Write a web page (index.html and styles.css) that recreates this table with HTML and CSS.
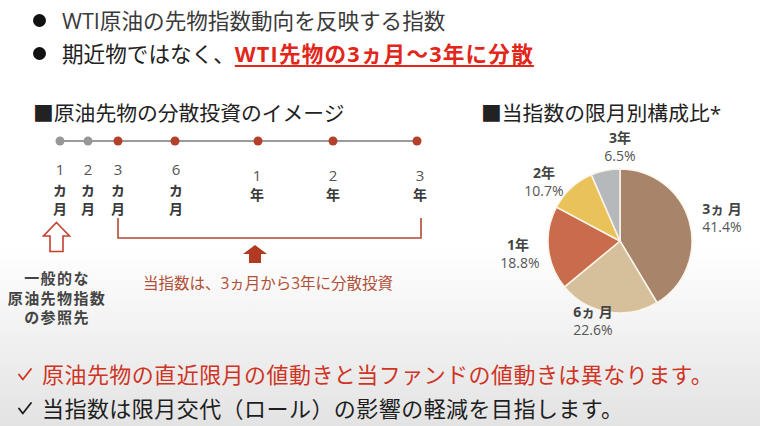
FILE: index.html
```html
<!DOCTYPE html>
<html lang="ja">
<head>
<meta charset="utf-8">
<title>WTI原油先物指数</title>
<link rel="stylesheet" href="styles.css">
</head>
<body>
<div class="slide">
  <ul class="points">
    <li>WTI原油の先物指数動向を反映する指数</li>
    <li><span class="strong">期近物ではなく、</span><span class="em">WTI先物の3ヵ月～3年に分散</span></li>
  </ul>

  <div class="charts">
    <section class="panel panel-left">
      <h2 class="panel-title">■原油先物の分散投資のイメージ</h2>
      <svg class="diagram" width="470" height="212" viewBox="0 -2 470 212">
        <line x1="60" y1="13" x2="417" y2="13" class="axis"/>
        <circle cx="60" cy="13" r="4.5" class="dot-grey"/>
        <circle cx="88" cy="13" r="4.5" class="dot-grey"/>
        <circle cx="118" cy="13" r="4.5" class="dot-red"/>
        <circle cx="175" cy="13" r="4.5" class="dot-red"/>
        <circle cx="258" cy="13" r="4.5" class="dot-red"/>
        <circle cx="333" cy="13" r="4.5" class="dot-red"/>
        <circle cx="417" cy="13" r="4.5" class="dot-red"/>

        <g class="tick-num">
          <text x="60" y="41">1</text>
          <text x="88" y="41">2</text>
          <text x="118" y="41">3</text>
          <text x="176" y="41">6</text>
          <text x="257" y="47">1</text>
          <text x="333" y="47">2</text>
          <text x="420" y="47">3</text>
        </g>
        <g class="tick-unit">
          <text x="60" y="61" class="small">ヵ</text>
          <text x="88" y="61" class="small">ヵ</text>
          <text x="118" y="61" class="small">ヵ</text>
          <text x="176" y="61" class="small">ヵ</text>
          <text x="60" y="80">月</text>
          <text x="88" y="80">月</text>
          <text x="118" y="80">月</text>
          <text x="176" y="80">月</text>
          <text x="257" y="66">年</text>
          <text x="333" y="66">年</text>
          <text x="420" y="66">年</text>
        </g>

        <path d="M118 90 V110 H421 V90" class="bracket"/>
        <path d="M255 117 L267 126 L261 126 L261 135 L249 135 L249 126 L243 126 Z" class="arrow-solid"/>
        <path d="M56.5 94.5 L69.5 108 L63 108 L63 123.5 L50 123.5 L50 108 L43.5 108 Z" class="arrow-outline"/>

        <g class="ref-label">
          <text x="57" y="150">一般的な</text>
          <text x="57" y="169.5">原油先物指数</text>
          <text x="57" y="189">の参照先</text>
        </g>
        <text x="268" y="155" class="index-label">当指数は、3ヵ月から3年に分散投資</text>
      </svg>
    </section>

    <section class="panel panel-right">
      <h2 class="panel-title">■当指数の限月別構成比*</h2>
      <svg class="pie" width="290" height="212" viewBox="0 -2 290 212">
        <path d="M150 113 L150 41 A72 72 0 0 1 187.04 174.75 Z" fill="#a8856a" class="slice"/>
        <path d="M150 113 L187.04 174.75 A72 72 0 0 1 94.52 158.89 Z" fill="#d5c09b" class="slice"/>
        <path d="M150 113 L94.52 158.89 A72 72 0 0 1 86.47 79.11 Z" fill="#c86c4b" class="slice"/>
        <path d="M150 113 L86.47 79.11 A72 72 0 0 1 121.41 46.92 Z" fill="#e9c25a" class="slice"/>
        <path d="M150 113 L121.41 46.92 A72 72 0 0 1 150 41 Z" fill="#b6b9bc" class="slice"/>

        <g class="pie-label">
          <text x="150" y="9" class="unit">3年</text>
          <text x="150" y="27">6.5%</text>
          <text x="74" y="44" class="unit">2年</text>
          <text x="74" y="62">10.7%</text>
          <text x="252" y="80" class="unit">3ヵ 月</text>
          <text x="252" y="98">41.4%</text>
          <text x="48" y="116" class="unit">1年</text>
          <text x="50" y="134">18.8%</text>
          <text x="123" y="183" class="unit">6ヵ 月</text>
          <text x="123" y="201">22.6%</text>
        </g>
      </svg>
    </section>
  </div>

  <ul class="notes">
    <li class="note-warn"><svg class="check" width="14" height="13" viewBox="0 0 14 13"><polyline points="1,6.5 4.8,11.5 13,1"/></svg>原油先物の直近限月の値動きと当ファンドの値動きは異なります。</li>
    <li class="note-info"><svg class="check" width="14" height="13" viewBox="0 0 14 13"><polyline points="1,6.5 4.8,11.5 13,1"/></svg>当指数は限月交代（ロール）の影響の軽減を目指します。</li>
  </ul>
</div>
</body>
</html>
```

FILE: styles.css
```css
html, body {
  margin: 0;
  padding: 0;
}

body {
  width: 760px;
  height: 426px;
  overflow: hidden;
  background: linear-gradient(180deg, #ffffff 0%, #ffffff 58%, #e3e3e3 100%);
  font-family: "Open Sans", "Noto Sans CJK JP", sans-serif;
  color: #333;
}

.slide {
  display: flex;
  flex-direction: column;
}

.points {
  list-style: none;
  margin: 0;
  padding: 4px 0 0 33px;
  font-size: 21.6px;
  line-height: 33px;
  color: #3a3a3a;
}

.points li {
  display: flex;
  align-items: center;
  white-space: nowrap;
}

.points li::before {
  content: "";
  flex: none;
  width: 13px;
  height: 13px;
  border-radius: 50%;
  background: #111;
  margin-right: 16px;
}

.strong {
  color: #222;
}

.em {
  color: #e2261a;
  font-weight: 700;
  letter-spacing: 1.2px;
  text-decoration: underline;
  text-decoration-thickness: 2px;
  text-underline-offset: 3px;
}

.charts {
  display: flex;
  margin-top: 31px;
}

.panel-left {
  width: 470px;
}

.panel-right {
  width: 290px;
}

.panel-title {
  margin: 0 0 1px;
  font-size: 20.8px;
  font-weight: 400;
  line-height: 24px;
  color: #222;
  white-space: nowrap;
}

.panel-left .panel-title {
  padding-left: 33px;
}

.panel-right .panel-title {
  padding-left: 11px;
}

.diagram,
.pie {
  display: block;
}

.axis {
  stroke: #7a7a7a;
  stroke-width: 1.5;
}

.dot-grey {
  fill: #979797;
}

.dot-red {
  fill: #b5402a;
}

.diagram text,
.pie text {
  text-anchor: middle;
  dominant-baseline: central;
}

.tick-num {
  font-size: 15px;
  fill: #555;
}

.tick-unit {
  font-size: 14px;
  font-weight: 700;
  fill: #3a3a3a;
}

.tick-unit .small {
  font-size: 16px;
}

.bracket {
  fill: none;
  stroke: #b04a35;
  stroke-width: 1.6;
}

.arrow-solid {
  fill: #b33a22;
}

.arrow-outline {
  fill: #fff;
  stroke: #c4402d;
  stroke-width: 1.6;
}

.ref-label {
  font-size: 15px;
  letter-spacing: 1.4px;
  font-weight: 700;
  fill: #444;
}

.index-label {
  font-size: 15.5px;
  fill: #b24f37;
}

.slice {
  stroke: #fbf4ea;
  stroke-width: 1.5;
  stroke-linejoin: round;
}

.pie-label {
  font-size: 14px;
  fill: #555;
}

.pie-label .unit {
  font-weight: 700;
  fill: #444;
}

.notes {
  list-style: none;
  margin: 19px 0 0;
  padding: 0 0 0 18px;
  font-size: 22px;
  letter-spacing: 0.45px;
  line-height: 34px;
}

.notes li {
  display: flex;
  align-items: center;
  white-space: nowrap;
}

.check {
  flex: none;
  margin-right: 10px;
  fill: none;
  stroke: currentColor;
  stroke-width: 1.8;
  stroke-linecap: round;
  stroke-linejoin: round;
}

.note-warn {
  color: #cf3424;
}

.note-info {
  color: #1e1e1e;
}
```
